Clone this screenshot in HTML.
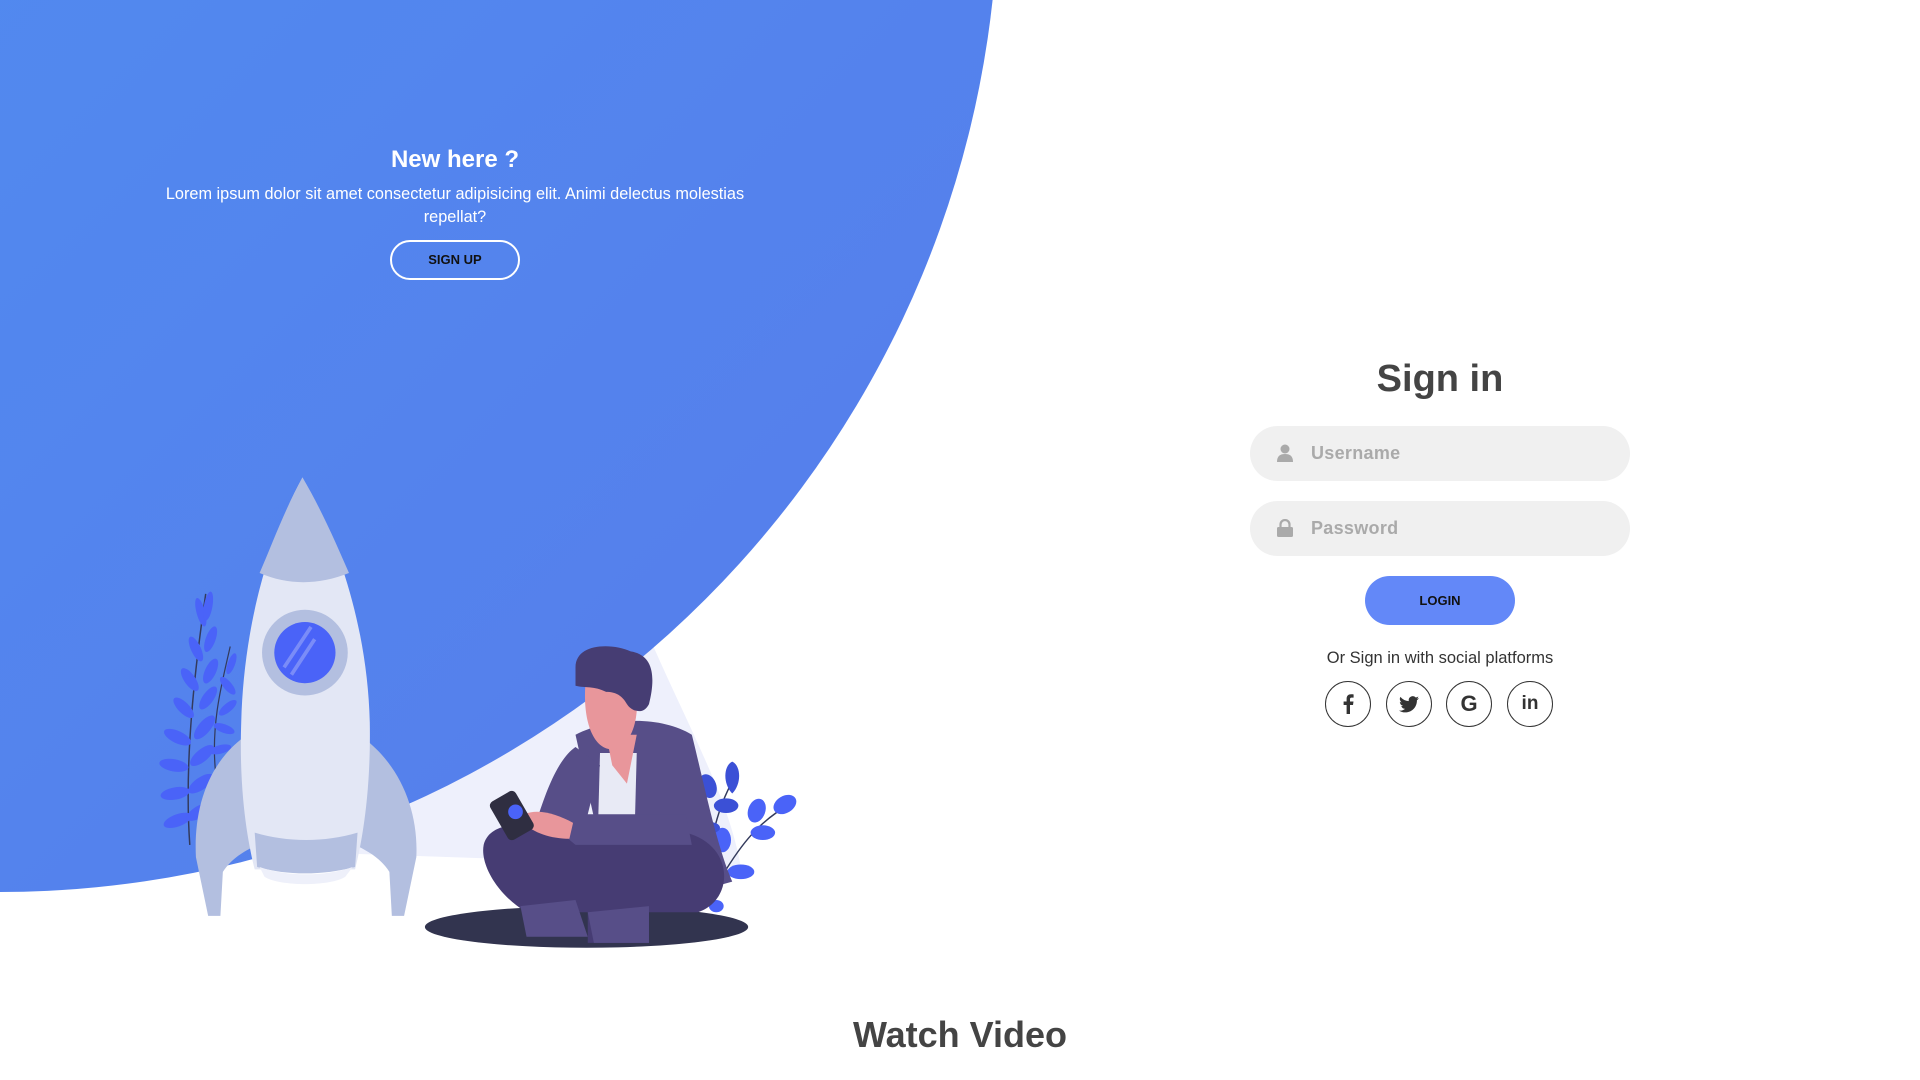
<!DOCTYPE html>
<html><head><meta charset="utf-8">
<style>
*{margin:0;padding:0;box-sizing:border-box}
html,body{width:1920px;height:1080px;overflow:hidden;background:#fff;font-family:"Liberation Sans",sans-serif}
svg.bg{position:absolute;left:0;top:0}
.panel{position:absolute;left:130px;width:650px;top:144px;text-align:center;color:#fff}
.panel h3{font-size:24px;font-weight:700;line-height:32px}
.panel p{font-size:16.3px;line-height:23px;margin:7px auto 0;width:610px;letter-spacing:0}
.btnT{display:block;margin:11px auto 0;width:130px;height:40px;border:2px solid #fff;border-radius:49px;background:transparent;color:#111;font-size:13px;font-weight:700;line-height:36px}
h2{position:absolute;left:1250px;width:380px;top:358px;text-align:center;font-size:38px;color:#444;font-weight:700}
.inp{position:absolute;left:1250px;width:380px;height:55px;border-radius:55px;background:#f0f0f0}
.inp span{position:absolute;left:61px;top:0;line-height:55px;font-size:18px;color:#aaa;font-weight:700;letter-spacing:.3px}
.inp svg{position:absolute;left:27px;top:18px}
.login{position:absolute;left:1365px;top:576px;width:150px;height:49px;border-radius:49px;background:#6388f8;color:#111;font-size:13px;font-weight:700;text-align:center;line-height:49px}
.or{position:absolute;left:1250px;width:380px;top:649px;text-align:center;font-size:16.5px;color:#333}
.soc{position:absolute;top:681px;width:46px;height:46px;border:1px solid #333;border-radius:50%;display:flex;align-items:center;justify-content:center;font-weight:700;color:#333;font-size:20px}
.wv{position:absolute;left:0;width:1920px;top:1014px;text-align:center;font-size:36px;font-weight:700;color:#444}
</style></head><body>
<svg class="bg" width="1920" height="1080" viewBox="0 0 1568 882">
<defs><linearGradient id="g" x1="0" y1="0" x2="1" y2="1">
<stop offset="0" stop-color="#4b97f3"/><stop offset="1" stop-color="#577ceb"/></linearGradient></defs>
<path d="M280 697 L605 708 C595 650 560 590 528 515 Z" fill="#eef0fc"/>
<circle cx="-1.3" cy="-88.2" r="816.7" fill="url(#g)"/>
<g fill="#4a63f8">
<path d="M155 690 C150 620 160 540 168 485" stroke="#333a5c" stroke-width="1.2" fill="none"/>
<path d="M176 630 C172 590 182 555 188 528" stroke="#333a5c" stroke-width="1" fill="none"/>
<ellipse cx="145" cy="670" rx="12" ry="5" transform="rotate(-20 145 670)"/>
<ellipse cx="163" cy="663" rx="12" ry="5" transform="rotate(-30 163 663)"/>
<ellipse cx="143" cy="648" rx="12" ry="5" transform="rotate(-10 143 648)"/>
<ellipse cx="164" cy="640" rx="12" ry="5" transform="rotate(-35 164 640)"/>
<ellipse cx="142" cy="625" rx="12" ry="5" transform="rotate(10 142 625)"/>
<ellipse cx="165" cy="617" rx="12" ry="5" transform="rotate(-40 165 617)"/>
<ellipse cx="145" cy="602" rx="12" ry="5" transform="rotate(25 145 602)"/>
<ellipse cx="167" cy="594" rx="12" ry="5" transform="rotate(-50 167 594)"/>
<ellipse cx="150" cy="578" rx="11" ry="4.5" transform="rotate(45 150 578)"/>
<ellipse cx="170" cy="570" rx="11" ry="4.5" transform="rotate(-55 170 570)"/>
<ellipse cx="155" cy="555" rx="11" ry="4.5" transform="rotate(55 155 555)"/>
<ellipse cx="172" cy="548" rx="11" ry="4.5" transform="rotate(-65 172 548)"/>
<ellipse cx="160" cy="530" rx="11" ry="4" transform="rotate(65 160 530)"/>
<ellipse cx="172" cy="522" rx="11" ry="4" transform="rotate(-70 172 522)"/>
<ellipse cx="164" cy="500" rx="12" ry="3.5" transform="rotate(75 164 500)"/>
<ellipse cx="170" cy="495" rx="12" ry="3.5" transform="rotate(-80 170 495)"/>
<ellipse cx="180" cy="612" rx="9" ry="3.5" transform="rotate(-15 180 612)"/>
<ellipse cx="183" cy="595" rx="9" ry="3.5" transform="rotate(20 183 595)"/>
<ellipse cx="186" cy="578" rx="9" ry="3.5" transform="rotate(-40 186 578)"/>
<ellipse cx="186" cy="560" rx="9" ry="3.5" transform="rotate(50 186 560)"/>
<ellipse cx="189" cy="542" rx="9" ry="3" transform="rotate(-70 189 542)"/>
</g>
<path d="M205 598 C170 620 158 660 160 700 L170 748 L180 748 L182 712 C190 700 200 695 210 690 Z" fill="#b3bfe0"/>
<path d="M290 598 C325 620 342 660 340 700 L330 748 L320 748 L318 712 C310 700 300 695 290 690 Z" fill="#b3bfe0"/>
<path d="M247 390 C275 440 300 510 302 590 C303 650 295 690 290 710 L208 710 C203 690 195 650 197 590 C199 510 220 440 247 390 Z" fill="#e3e7f5"/>
<path d="M247 390 C262 415 275 445 285 468 C260 478 235 478 212 468 C222 445 233 415 247 390 Z" fill="#b3bfe0"/>
<path d="M208 680 C235 688 265 688 292 680 L290 708 C263 715 235 715 210 708 Z" fill="#b3bfe0"/>
<path d="M212 708 C235 716 265 716 288 708 L282 716 C270 724 228 724 216 716 Z" fill="#eef0fa"/>
<circle cx="249" cy="533" r="35" fill="#b3bfe0"/>
<circle cx="249" cy="533" r="25" fill="#4a63f8"/>
<path d="M232 545 L254 512 M238 551 L257 522" stroke="#7a8cf8" stroke-width="3"/>
<g fill="#4a63f8">
<path d="M578 740 C575 700 585 660 600 635 M590 715 C605 690 620 670 648 655" stroke="#333a5c" stroke-width="1.2" fill="none"/>
<path d="M598 622 C605 625 606 640 598 648 C590 640 591 625 598 622Z" fill="#3b50d6"/>
<ellipse cx="578" cy="642" rx="7" ry="10" transform="rotate(-20 578 642)" fill="#3b50d6"/>
<ellipse cx="593" cy="658" rx="10" ry="6" fill="#3b50d6"/>
<ellipse cx="590" cy="686" rx="7" ry="10"/>
<ellipse cx="578" cy="676" rx="10" ry="5" fill="#3b50d6"/>
<ellipse cx="618" cy="662" rx="7" ry="10" transform="rotate(20 618 662)"/>
<ellipse cx="641" cy="657" rx="10" ry="7" transform="rotate(-30 641 657)"/>
<ellipse cx="623" cy="680" rx="10" ry="6"/>
<ellipse cx="605" cy="712" rx="11" ry="6"/>
<ellipse cx="585" cy="740" rx="6" ry="5"/>
</g>
<ellipse cx="479" cy="757" rx="132" ry="17" fill="#32344f"/>
<path d="M470 600 C500 585 540 585 565 600 C575 640 585 690 598 720 L580 725 L565 700 L490 690 Z" fill="#574e88"/>
<path d="M490 615 L520 615 L518 690 L488 690 Z" fill="#e8eaf5"/>
<path d="M495 600 L520 600 L512 640 L500 625 Z" fill="#e8969b"/>
<path d="M478 560 C478 545 515 545 520 565 C522 590 515 610 500 612 C485 612 476 590 478 560Z" fill="#e8969b"/>
<path d="M470 545 C470 525 500 525 515 532 C535 535 535 555 530 575 C525 585 515 580 512 575 C508 568 503 565 495 565 C485 560 478 562 470 560 Z" fill="#463d73"/>
<path d="M395 690 C400 670 430 670 470 680 L560 680 C600 690 600 735 570 745 L530 745 L530 770 L480 770 L480 745 L430 745 C405 730 392 705 395 690Z" fill="#463c73"/>
<path d="M425 740 L470 735 L480 765 L430 765Z" fill="#574e88"/>
<path d="M480 745 L530 740 L530 770 L485 770Z" fill="#574e88"/>
<path d="M470 610 C455 620 445 650 440 665 L470 690 L565 690 L560 665 L480 665 L490 625 Z" fill="#574e88"/>
<path d="M428 665 C440 660 455 665 468 672 L465 685 C450 685 435 680 428 672Z" fill="#e8969b"/>
<rect x="406" y="648" width="24" height="36" rx="4" fill="#2f2e41" transform="rotate(-30 418 666)"/>
<circle cx="421" cy="663" r="6" fill="#4a63f8"/>
</svg>
<div class="panel">
<h3>New here ?</h3>
<p>Lorem ipsum dolor sit amet consectetur adipisicing elit. Animi delectus molestias repellat?</p>
<div class="btnT">SIGN UP</div>
</div>
<h2>Sign in</h2>
<div class="inp" style="top:426px"><svg width="16" height="18" viewBox="0 0 16 18"><circle cx="8" cy="5" r="4.5" fill="#aaa"/><path d="M0 18 C0 12 3 10 8 10 C13 10 16 12 16 18Z" fill="#aaa"/></svg><span>Username</span></div>
<div class="inp" style="top:501px"><svg width="16" height="18" viewBox="0 0 16 18"><path d="M3.5 8 V5.5 A4.5 4.5 0 0 1 12.5 5.5 V8" stroke="#aaa" stroke-width="2.2" fill="none"/><rect x="0" y="8" width="16" height="10" rx="1.5" fill="#aaa"/></svg><span>Password</span></div>
<div class="login">LOGIN</div>
<div class="or">Or Sign in with social platforms</div>
<div class="soc" style="left:1325px"><svg width="12" height="20" viewBox="0 0 12 20"><path d="M8 20V11h3l.5-3.5H8V5.3c0-1 .3-1.7 1.8-1.7H11.6V.4C11.3.3 10.2.2 9 .2 6.4.2 4.6 1.8 4.6 4.7v2.8H1.6V11h3v9z" fill="#333"/></svg></div>
<div class="soc" style="left:1386px"><svg width="20" height="17" viewBox="0 0 24 20"><path d="M24 2.4a9.8 9.8 0 0 1-2.8.8A4.9 4.9 0 0 0 23.3.4a9.9 9.9 0 0 1-3.1 1.2A4.9 4.9 0 0 0 11.8 6 14 14 0 0 1 1.7.9a4.9 4.9 0 0 0 1.5 6.6A4.9 4.9 0 0 1 1 6.9a4.9 4.9 0 0 0 3.9 4.8 4.9 4.9 0 0 1-2.2.1 4.9 4.9 0 0 0 4.6 3.4A9.9 9.9 0 0 1 0 17.3 14 14 0 0 0 7.5 19.5c9.1 0 14-7.5 14-14v-.6A10 10 0 0 0 24 2.4z" fill="#333"/></svg></div>
<div class="soc" style="left:1446px;font-size:22px">G</div>
<div class="soc" style="left:1507px;font-size:19px">in</div>
<div class="wv">Watch Video</div>
</body></html>
